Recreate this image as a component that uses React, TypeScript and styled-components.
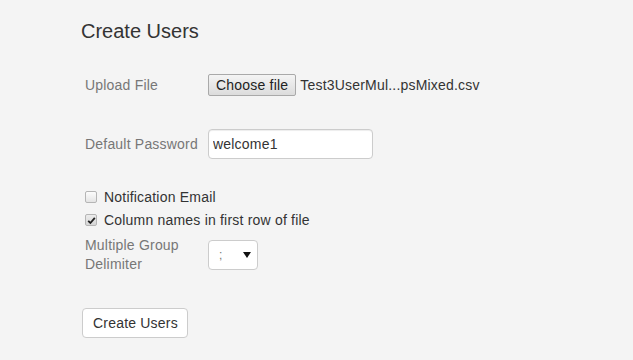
import React from 'react';
import styled, { createGlobalStyle } from 'styled-components';

const GlobalStyle = createGlobalStyle`
    body {
        margin: 0;
        background: #f4f4f4;
        font-family: "Liberation Sans", Arial, sans-serif;
        color: #333;
    }
`;

const Page = styled.div`
    padding: 20px 0 0 81px;
    width: 552px;
    height: 340px;
    overflow: hidden;
`;

const Title = styled.h1`
    margin: 0;
    font-size: 20px;
    line-height: 22px;
    font-weight: normal;
    color: #333;
`;

const Form = styled.form`
    display: flex;
    flex-direction: column;
    letter-spacing: 0.2px;
`;

const FormRow = styled.div<{ top: number }>`
    display: grid;
    grid-template-columns: 127px 1fr;
    align-items: center;
    margin-top: ${props => props.top}px;
`;

const Label = styled.label`
    padding-left: 4px;
    padding-right: 2px;
    font-size: 14px;
    line-height: 19px;
    color: #777;
`;

const FileControl = styled.div`
    display: flex;
    align-items: center;
    font-size: 14px;
`;

const ChooseButton = styled.button`
    height: 22px;
    padding: 0 7px;
    border: 1px solid #a9a9a9;
    border-radius: 2px;
    background: linear-gradient(#f4f4f4, #dcdcdc);
    font-family: inherit;
    font-size: 14px;
    letter-spacing: inherit;
    color: #222;
`;

const FileName = styled.span`
    margin-left: 4px;
    color: #333;
`;

const TextInput = styled.input`
    box-sizing: border-box;
    width: 165px;
    height: 30px;
    padding: 0 4px;
    border: 1px solid #ccc;
    border-radius: 4px;
    box-shadow: inset 0 1px 1px rgba(0, 0, 0, 0.075);
    background: #fff;
    font-family: inherit;
    font-size: 14px;
    letter-spacing: inherit;
    color: #333;
    outline: none;
`;

const CheckRow = styled.label<{ top: number }>`
    display: flex;
    align-items: center;
    gap: 7px;
    height: 20px;
    margin-top: ${props => props.top}px;
    padding-left: 4px;
    font-size: 14px;
    color: #333;
`;

const CheckBox = styled.span<{ checked?: boolean }>`
    box-sizing: border-box;
    display: flex;
    align-items: center;
    justify-content: center;
    width: 12px;
    height: 12px;
    border: 1px solid #b5b5b5;
    border-radius: 2px;
    background: ${props =>
        props.checked ? 'linear-gradient(#ececec, #d6d6d6)' : 'linear-gradient(#fcfcfc, #e4e4e4)'};
`;

const SelectBox = styled.div`
    box-sizing: border-box;
    display: flex;
    align-items: center;
    justify-content: space-between;
    width: 50px;
    height: 30px;
    padding: 0 6px 0 10px;
    border: 1px solid #ccc;
    border-radius: 4px;
    background: #fff;
    font-size: 12px;
    color: #777;
`;

const SubmitButton = styled.button`
    align-self: flex-start;
    margin-top: 34px;
    margin-left: 1px;
    height: 30px;
    padding: 0 9px 0 10px;
    border: 1px solid #ccc;
    border-radius: 4px;
    background: #fff;
    font-family: inherit;
    font-size: 14px;
    letter-spacing: inherit;
    color: #333;
`;

const Check = ({ checked }: { checked?: boolean }) => (
    <CheckBox checked={checked}>
        {checked && (
            <svg width="9" height="9" viewBox="0 0 9 9">
                <path d="M1.2 4.8 L3.4 7 L7.8 1.8" fill="none" stroke="#222" strokeWidth="1.8" />
            </svg>
        )}
    </CheckBox>
);

const App = () => (
    <>
        <GlobalStyle />
        <Page>
            <Title>Create Users</Title>
            <Form onSubmit={e => e.preventDefault()}>
                <FormRow top={32}>
                    <Label>Upload File</Label>
                    <FileControl>
                        <ChooseButton type="button">Choose file</ChooseButton>
                        <FileName>Test3UserMul...psMixed.csv</FileName>
                    </FileControl>
                </FormRow>
                <FormRow top={33}>
                    <Label>Default Password</Label>
                    <TextInput type="text" defaultValue="welcome1" />
                </FormRow>
                <CheckRow top={28}>
                    <Check />
                    Notification Email
                </CheckRow>
                <CheckRow top={3}>
                    <Check checked />
                    Column names in first row of file
                </CheckRow>
                <FormRow top={6}>
                    <Label>Multiple Group Delimiter</Label>
                    <SelectBox>
                        <span>;</span>
                        <svg width="8" height="6" viewBox="0 0 8 6">
                            <path d="M0 0 H8 L4 6 Z" fill="#111" />
                        </svg>
                    </SelectBox>
                </FormRow>
                <SubmitButton type="button">Create Users</SubmitButton>
            </Form>
        </Page>
    </>
);

export default App;
